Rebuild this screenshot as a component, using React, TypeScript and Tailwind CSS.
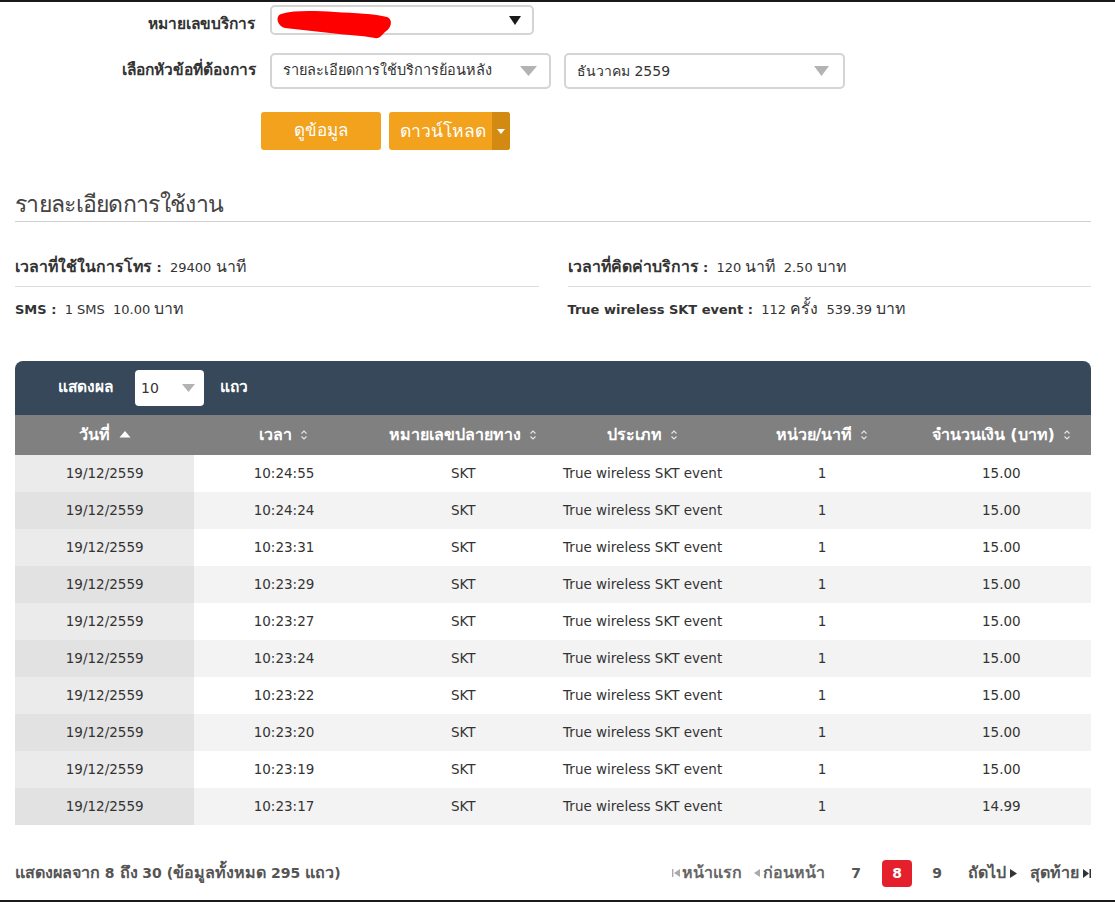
import React from "react";

const rows: string[][] = [
  ["19/12/2559", "10:24:55", "SKT", "True wireless SKT event", "1", "15.00"],
  ["19/12/2559", "10:24:24", "SKT", "True wireless SKT event", "1", "15.00"],
  ["19/12/2559", "10:23:31", "SKT", "True wireless SKT event", "1", "15.00"],
  ["19/12/2559", "10:23:29", "SKT", "True wireless SKT event", "1", "15.00"],
  ["19/12/2559", "10:23:27", "SKT", "True wireless SKT event", "1", "15.00"],
  ["19/12/2559", "10:23:24", "SKT", "True wireless SKT event", "1", "15.00"],
  ["19/12/2559", "10:23:22", "SKT", "True wireless SKT event", "1", "15.00"],
  ["19/12/2559", "10:23:20", "SKT", "True wireless SKT event", "1", "15.00"],
  ["19/12/2559", "10:23:19", "SKT", "True wireless SKT event", "1", "15.00"],
  ["19/12/2559", "10:23:17", "SKT", "True wireless SKT event", "1", "14.99"],
];

const T = ({ children }: { children: React.ReactNode }) => (
  <span className="text-[1.22em]">{children}</span>
);

const SortBoth = () => (
  <svg width="8" height="12" viewBox="0 0 8 12" className="inline-block ml-[8px] align-[-1px]">
    <path d="M1.5 4.5 L4 2 L6.5 4.5" fill="none" stroke="#e6e6e6" strokeWidth="1.1" />
    <path d="M1.5 7.5 L4 10 L6.5 7.5" fill="none" stroke="#e6e6e6" strokeWidth="1.1" />
  </svg>
);

const SortUp = () => (
  <svg width="12" height="8" viewBox="0 0 12 8" className="inline-block ml-[9px] align-[2px]">
    <path d="M0.5 7.5 L6 1 L11.5 7.5 Z" fill="#ffffff" />
  </svg>
);

const Tri = ({ color, w, h }: { color: string; w: number; h: number }) => (
  <svg width={w} height={h} viewBox={`0 0 ${w} ${h}`}>
    <path d={`M0 0 L${w} 0 L${w / 2} ${h} Z`} fill={color} />
  </svg>
);

const headers = ["วันที่", "เวลา", "หมายเลขปลายทาง", "ประเภท", "หน่วย/นาที", "จำนวนเงิน (บาท)"];

export default function App() {
  const font = { fontFamily: '"DejaVu Sans", "Noto Sans", sans-serif' };
  return (
    <div className="w-[1115px] h-[902px] bg-white relative overflow-hidden text-[#333]" style={font}>
      <div className="h-[2px] bg-[#1a1a1a]" />
      <div className="pl-[15px] pr-[24px]">
        {/* form */}
        <div className="flex items-center mt-[3px] h-[30px]">
          <div className="w-[241px] text-right text-[15.5px] font-bold text-[#333] pr-[1px] mt-[10px]">หมายเลขบริการ</div>
          <div className="ml-[14px] w-[264px] h-[30px] border-2 border-[#d4d4d4] rounded-[5px] relative flex items-center justify-end pr-[11px]">
            <svg width="118" height="32" viewBox="0 0 118 32" className="absolute left-[3px] top-[1px]">
              <path d="M6 6 C20 2 40 3 60 4 C80 5 100 6 112 9 C118 11 117 20 110 24 C106 28 104 31 100 30 C85 27 70 27 55 25 C40 23 25 22 10 20 C2 18 0 8 6 6 Z" fill="#ff0000" />
            </svg>
            <Tri color="#1a1a1a" w={12} h={9} />
          </div>
        </div>
        <div className="flex items-center mt-[18px] h-[36px]">
          <div className="w-[241px] text-right text-[15.5px] font-bold text-[#333]">เลือกหัวข้อที่ต้องการ</div>
          <div className="ml-[14px] w-[281px] h-[36px] border-2 border-[#d4d4d4] rounded-[5px] flex items-center justify-between pl-[11px] pr-[12px]">
            <span className="text-[14.5px] text-[#333]">รายละเอียดการใช้บริการย้อนหลัง</span>
            <Tri color="#b3b3b3" w={17} h={10} />
          </div>
          <div className="ml-[13px] w-[281px] h-[36px] border-2 border-[#d4d4d4] rounded-[5px] flex items-center justify-between pl-[11px] pr-[14px]">
            <span className="text-[14px] text-[#333]">ธันวาคม 2559</span>
            <Tri color="#b3b3b3" w={15} h={10} />
          </div>
        </div>
        <div className="flex mt-[23px] ml-[246px] gap-[8px]">
          <button className="w-[120px] h-[38px] rounded-[3px] bg-[#f2a21c] text-white text-[17px] flex items-center justify-center">ดูข้อมูล</button>
          <button className="w-[121px] h-[38px] rounded-[3px] bg-[#f2a21c] text-white text-[17.5px] flex items-stretch overflow-hidden">
            <span className="flex-1 flex items-center justify-center pl-[4px]">ดาวน์โหลด</span>
            <span className="w-[18px] bg-[#d28a12] flex items-center justify-center">
              <Tri color="#ffffff" w={8} h={5} />
            </span>
          </button>
        </div>

        {/* heading */}
        <div className="mt-[39px] border-b border-[#cfcfcf] pb-[2px]">
          <h1 className="text-[23px] leading-[30px] font-light tracking-[-0.7px] text-[#444]">รายละเอียดการใช้งาน</h1>
        </div>

        {/* stats */}
        <div className="grid grid-cols-2 gap-x-[29px] mt-[32px] text-[13px]">
          <div className="border-b border-[#dcdcdc] h-[33px] leading-[26px]">
            <b><T>เวลาที่ใช้ในการโทร</T> :</b>&nbsp; 29400 <T>นาที</T>
          </div>
          <div className="border-b border-[#dcdcdc] h-[33px] leading-[26px]">
            <b><T>เวลาที่คิดค่าบริการ</T> :</b>&nbsp; 120 <T>นาที</T> &nbsp;2.50 <T>บาท</T>
          </div>
          <div className="h-[44px] leading-[44px]">
            <b>SMS :</b>&nbsp; 1 SMS &nbsp;10.00 <T>บาท</T>
          </div>
          <div className="h-[44px] leading-[44px]">
            <b>True wireless SKT event :</b>&nbsp; 112 <T>ครั้ง</T> &nbsp;539.39 <T>บาท</T>
          </div>
        </div>

        {/* table */}
        <div className="mt-[30px]">
          <div className="h-[54px] bg-[#364859] rounded-t-[8px] flex items-center pl-[43px] text-white">
            <span className="text-[15.5px] font-bold">แสดงผล</span>
            <div className="ml-[22px] w-[69px] h-[36px] bg-white rounded-[4px] flex items-center justify-between pl-[6px] pr-[9px] text-[#333] text-[14px]">
              <span>10</span>
              <Tri color="#b3b3b3" w={13} h={8} />
            </div>
            <span className="ml-[16px] text-[15.5px] font-bold">แถว</span>
          </div>
          <table className="w-full table-fixed border-collapse">
            <thead>
              <tr className="h-[40px] bg-[#808080] text-white text-[16px] font-bold">
                {headers.map((h, i) => (
                  <th key={h} className="font-bold text-center">
                    {h}
                    {i === 0 ? <SortUp /> : <SortBoth />}
                  </th>
                ))}
              </tr>
            </thead>
            <tbody className="text-[13.5px] text-[#333]">
              {rows.map((r, ri) => (
                <tr key={ri} className={ri % 2 === 0 ? "h-[37px] bg-white" : "h-[37px] bg-[#f3f3f3]"}>
                  {r.map((c, ci) => (
                    <td
                      key={ci}
                      className={
                        ci === 0
                          ? ri % 2 === 0
                            ? "text-center bg-[#ebebeb]"
                            : "text-center bg-[#e2e2e2]"
                          : "text-center"
                      }
                    >
                      {c}
                    </td>
                  ))}
                </tr>
              ))}
            </tbody>
          </table>
        </div>

        {/* footer */}
        <div className="flex items-center justify-between mt-[33px] h-[30px]">
          <div className="text-[14px] font-bold text-[#555]">
            <span className="text-[1.15em]">แสดงผลจาก</span> 8 <span className="text-[1.15em]">ถึง</span> 30 (<span className="text-[1.15em]">ข้อมูลทั้งหมด</span> 295 <span className="text-[1.15em]">แถว</span>)
          </div>
          <div className="flex items-center text-[16px] font-bold text-[#555]">
            <span className="flex items-center">
              <svg width="8" height="8" viewBox="0 0 8 8" className="mr-[2px]">
                <rect x="0" y="0" width="1.4" height="8" fill="#aaa" />
                <path d="M8 0 L2 4 L8 8 Z" fill="#aaa" />
              </svg>
              <span className="text-[#666]">หน้าแรก</span>
            </span>
            <span className="flex items-center ml-[12px]">
              <svg width="6" height="8" viewBox="0 0 6 8" className="mr-[3px]">
                <path d="M6 0 L0 4 L6 8 Z" fill="#aaa" />
              </svg>
              <span className="text-[#666]">ก่อนหน้า</span>
            </span>
            <span className="ml-[26px] w-[10px] text-center text-[14px]">7</span>
            <span className="ml-[21px] w-[30px] h-[27px] rounded-[4px] bg-[#e4202c] text-white flex items-center justify-center text-[14px]">8</span>
            <span className="ml-[20px] w-[10px] text-center text-[14px]">9</span>
            <span className="flex items-center ml-[26px]">
              <span>ถัดไป</span>
              <svg width="7" height="9" viewBox="0 0 7 9" className="ml-[4px]">
                <path d="M0 0 L7 4.5 L0 9 Z" fill="#333" />
              </svg>
            </span>
            <span className="flex items-center ml-[13px]">
              <span>สุดท้าย</span>
              <svg width="8" height="9" viewBox="0 0 8 9" className="ml-[4px]">
                <path d="M0 0 L6 4.5 L0 9 Z" fill="#333" />
                <rect x="6.5" y="0" width="1.5" height="9" fill="#333" />
              </svg>
            </span>
          </div>
        </div>
      </div>
      <div className="absolute left-0 right-0 bottom-0 h-[2px] bg-[#1a1a1a]" />
    </div>
  );
}
